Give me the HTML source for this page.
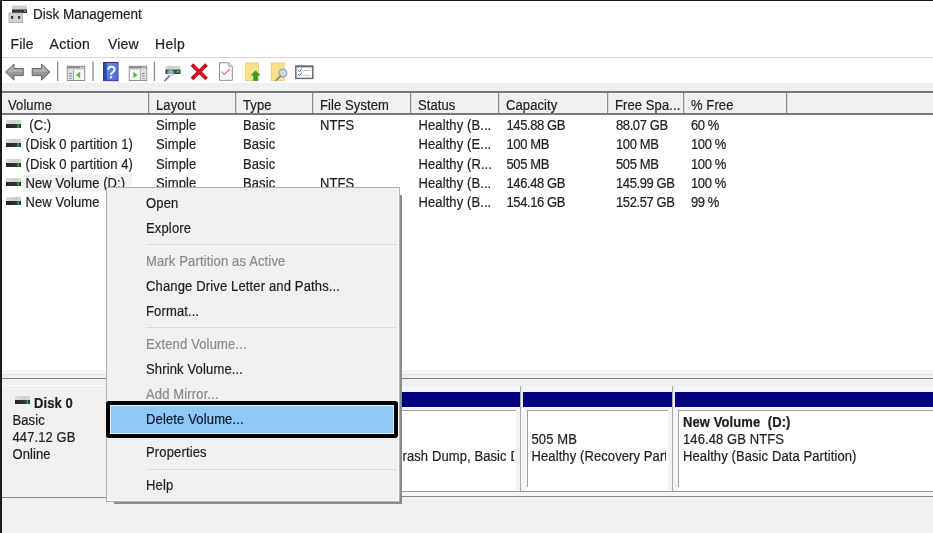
<!DOCTYPE html>
<html><head><meta charset="utf-8">
<style>
*{margin:0;padding:0;box-sizing:border-box}
html,body{width:933px;height:533px;overflow:hidden;background:#f0f0f0}
body{font-family:"Liberation Sans",sans-serif;font-size:13px;color:#1e1e1e;-webkit-text-stroke:0.2px currentColor;position:relative;letter-spacing:0.1px}
.a{position:absolute;white-space:nowrap;transform:scaleY(1.08);transform-origin:0 0}
.b{position:absolute}
.ht{font-size:13px}
.rt{font-size:13px}
.mi{position:absolute;transform:scaleY(1.08);transform-origin:0 0;letter-spacing:0.15px;left:39px;font-size:13px;color:#1e1e1e;white-space:nowrap}
.dis{color:#8a8a8a}
.sep{position:absolute;left:39px;width:250px;height:1px;background:#d9d9d9}
.hs{position:absolute;top:93px;width:2px;height:20px;border-left:1px solid #8e8e8e;border-right:1px solid #d8d8d8}
.drv{position:absolute;left:6px;width:15px;height:8px}
.drv:before{content:"";position:absolute;left:0;top:0;width:15px;height:4px;background:linear-gradient(90deg,#dcdcdc,#d0d0d0 60%,#c8dcc8)}
.drv:after{content:"";position:absolute;left:0;top:4px;width:15px;height:4px;background:linear-gradient(90deg,#262626 0,#303030 55%,#223a2a 68%,#2c5a36 76%,#7cc88a 80%,#2c5a36 86%,#1a2e20 100%)}
</style></head><body>
<!-- window frame -->
<div class="b" style="left:0;top:0;width:933px;height:1px;background:#1a1a1a"></div>
<div class="b" style="left:0;top:0;width:2px;height:533px;background:#1a1a1a"></div>
<!-- title/menu/toolbar white -->
<div class="b" style="left:2px;top:1px;width:931px;height:56px;background:#fff"></div>
<div class="b" style="left:2px;top:57px;width:931px;height:1px;background:#d6d6d6"></div>
<div class="b" style="left:2px;top:58px;width:931px;height:25px;background:#fff"></div>
<!-- gray band then list -->
<div class="b" style="left:2px;top:91px;width:931px;height:2px;background:#767676"></div>
<div class="b" style="left:2px;top:93px;width:931px;height:20px;background:#f0f0f2;box-shadow:inset 0 1px 0 #f8f8f8"></div>
<div class="b" style="left:2px;top:113px;width:931px;height:2px;background:#7a7a7a"></div>
<div class="b" style="left:2px;top:115px;width:931px;height:255px;background:#fff"></div>
<div class="b" style="left:2px;top:370px;width:931px;height:5px;background:#f4f4f4"></div>
<div class="b" style="left:2px;top:374px;width:931px;height:1px;background:#e6e6e6"></div>
<div class="b" style="left:2px;top:378px;width:931px;height:1px;background:#7f7f7f"></div>

<!-- header separators -->
<div class="hs" style="left:148px"></div>
<div class="hs" style="left:235px"></div>
<div class="hs" style="left:312px"></div>
<div class="hs" style="left:410px"></div>
<div class="hs" style="left:498px"></div>
<div class="hs" style="left:607px"></div>
<div class="hs" style="left:683px"></div>
<div class="hs" style="left:786px"></div>

<!-- TOOLBAR ICONS -->
<svg class="b" style="left:0;top:0" width="330" height="90" viewBox="0 0 330 90">
<defs>
<linearGradient id="ga" x1="0" y1="0" x2="0" y2="1"><stop offset="0" stop-color="#b8b8b8"/><stop offset=".55" stop-color="#979797"/><stop offset="1" stop-color="#8a8a8a"/></linearGradient>
<linearGradient id="gh" x1="0" y1="0" x2="1" y2="1"><stop offset="0" stop-color="#5c80e0"/><stop offset="1" stop-color="#2a4cb8"/></linearGradient>
</defs>
<!-- title icon -->
<rect x="12" y="5.5" width="15" height="4.5" fill="#cfcfcf"/>
<rect x="12" y="9.5" width="15" height="3.5" fill="#333"/>
<rect x="24" y="10.3" width="2" height="1.6" fill="#8a8a8a"/>
<rect x="9" y="13" width="13.6" height="9.6" fill="#d4d4d4" stroke="#a8a8a8" stroke-width="0.8"/>
<rect x="11" y="16" width="2.2" height="2.8" fill="#333"/>
<rect x="18" y="16" width="2.2" height="2.8" fill="#333"/>
<!-- back arrow -->
<path d="M5.5 72 L14 64 L14 68.5 L23.3 68.5 L23.3 75.6 L14 75.6 L14 80.2 Z" fill="url(#ga)" stroke="#6a6a6a" stroke-width="1" stroke-linejoin="round"/>
<path d="M8 72 L13 67 L13 70 L22 70 L22 72 Z" fill="#bdbdbd" opacity=".6"/>
<!-- forward arrow -->
<path d="M50 72 L41.5 64 L41.5 68.5 L32.2 68.5 L32.2 75.6 L41.5 75.6 L41.5 80.2 Z" fill="url(#ga)" stroke="#6a6a6a" stroke-width="1" stroke-linejoin="round"/>
<path d="M47.5 72 L42.5 67 L42.5 70 L33.5 70 L33.5 72 Z" fill="#bdbdbd" opacity=".6"/>
<!-- separators -->
<rect x="57" y="61.5" width="1.3" height="19.5" fill="#8a8a8a"/>
<rect x="92.3" y="61.5" width="1.3" height="19.5" fill="#8a8a8a"/>
<rect x="153.8" y="61.5" width="1.3" height="19.5" fill="#8a8a8a"/>
<!-- window icon left -->
<rect x="67.3" y="66.3" width="17.4" height="14.2" fill="#fff" stroke="#8c8c8c" stroke-width="1"/>
<rect x="67.3" y="66.3" width="17.4" height="2.4" fill="#8a8a8a"/><rect x="80" y="66.8" width="1.4" height="1.4" fill="#e0e0e0"/><rect x="82.3" y="66.8" width="1.4" height="1.4" fill="#e0e0e0"/>
<rect x="67.8" y="68.7" width="16.4" height="1.4" fill="#dcdcdc"/>
<rect x="67.8" y="70.1" width="5.2" height="10" fill="#e2e2e2"/>
<rect x="73" y="70.1" width="0.9" height="10" fill="#9a9a9a"/>
<rect x="69" y="73" width="2.8" height="0.9" fill="#777"/>
<rect x="69" y="75.5" width="2.8" height="0.9" fill="#777"/>
<rect x="69" y="78" width="2.8" height="0.9" fill="#999"/>
<path d="M76 75 L80 72 L80 78 Z" fill="#6cc04a"/>
<rect x="74" y="70.5" width="9.5" height="9.3" fill="#e8f6e0" opacity=".6"/>
<path d="M76 75 L80.2 71.8 L80.2 78.2 Z" fill="#5eb840"/>
<!-- help -->
<rect x="103.5" y="62.5" width="14.5" height="18.2" fill="url(#gh)" stroke="#1e3c9c" stroke-width="1"/>
<rect x="104" y="63" width="2.5" height="17.2" fill="#2a48b0"/>
<rect x="107" y="63" width="10.5" height="17.2" fill="#7890e8" opacity=".5"/>
<text x="111.3" y="77.8" font-family="Liberation Sans" font-size="16" fill="#fff" stroke="#fff" stroke-width=".3" text-anchor="middle">?</text>
<!-- window icon right -->
<rect x="129.3" y="66.3" width="17.4" height="14.2" fill="#fff" stroke="#8c8c8c" stroke-width="1"/>
<rect x="129.3" y="66.3" width="17.4" height="2.4" fill="#8a8a8a"/><rect x="142" y="66.8" width="1.4" height="1.4" fill="#e0e0e0"/><rect x="144.3" y="66.8" width="1.4" height="1.4" fill="#e0e0e0"/>
<rect x="129.8" y="68.7" width="16.4" height="1.4" fill="#dcdcdc"/>
<rect x="140.5" y="70.1" width="5.7" height="10" fill="#e2e2e2"/>
<rect x="139.8" y="70.1" width="0.9" height="10" fill="#9a9a9a"/>
<rect x="142" y="73" width="2.8" height="0.9" fill="#777"/>
<rect x="142" y="75.5" width="2.8" height="0.9" fill="#777"/>
<rect x="142" y="78" width="2.8" height="0.9" fill="#999"/>
<rect x="130.3" y="70.5" width="9.3" height="9.3" fill="#e8f6e0" opacity=".6"/>
<path d="M137.5 75 L133.3 71.8 L133.3 78.2 Z" fill="#5eb840"/>
<!-- disk w/ magnifier -->
<rect x="165.5" y="65.8" width="15" height="4" fill="#cfd6cf"/>
<rect x="165.5" y="69.6" width="15" height="4.4" fill="#2e3e34"/>
<rect x="174" y="70.5" width="6" height="2.6" fill="#2f6a3a"/>
<rect x="177" y="71.2" width="2" height="1.2" fill="#9fe0a0"/>
<circle cx="170.5" cy="73" r="3.3" fill="#c0d8ec" opacity=".7" stroke="#9ab0c4" stroke-width=".8"/>
<path d="M165 80.5 L169 76.3" stroke="#6a7a8a" stroke-width="1.8" stroke-linecap="round"/>
<!-- red X -->
<path d="M193.3 66 L205.2 77.5 M205.2 66 L193.3 77.5" stroke="#b80c18" stroke-width="3.8" stroke-linecap="square"/>
<path d="M194 66.7 L204.5 76.8 M204.5 66.7 L194 76.8" stroke="#e01a28" stroke-width="1.6"/>
<!-- doc w/ check -->
<path d="M219.5 62.8 L228.8 62.8 L232.3 66.3 L232.3 80.3 L219.5 80.3 Z" fill="#fff" stroke="#8c8c8c" stroke-width="1"/>
<path d="M228.8 62.8 L228.8 66.3 L232.3 66.3" fill="#eee" stroke="#8c8c8c" stroke-width=".8"/>
<path d="M221.5 71.5 L224.3 74.6 L230 68.8" fill="none" stroke="#e88a6a" stroke-width="1.4"/>
<!-- yellow w/ green arrow -->
<rect x="245.3" y="63" width="13" height="17.5" fill="#fbe08a" stroke="#e8c868" stroke-width="0.8"/>
<path d="M255.6 70.8 L260 75.2 L257.6 75.2 L257.6 80.6 L253.6 80.6 L253.6 75.2 L251.2 75.2 Z" fill="#2ea02e" stroke="#1e8a1e" stroke-width=".5"/>
<!-- yellow w/ magnifier -->
<rect x="271.3" y="63" width="13" height="17.5" fill="#fbe08a" stroke="#e8c868" stroke-width="0.8"/>
<circle cx="283" cy="73" r="3.9" fill="#c8d8e4" stroke="#9aa8b0" stroke-width="1.2"/>
<path d="M276.3 80.2 L280.3 76.3" stroke="#8a7a50" stroke-width="1.6" stroke-linecap="round"/>
<!-- checklist window -->
<rect x="295.8" y="66" width="17" height="12.4" fill="#fbfdff" stroke="#6c6c6c" stroke-width="1.5"/>
<rect x="295.8" y="66" width="17" height="1.4" fill="#6c6c6c"/>
<path d="M298.2 70.2 L299.6 71.8 L301.8 68.5" fill="none" stroke="#4a78c8" stroke-width="1"/>
<path d="M298.2 74.2 L299.6 75.8 L301.8 72.5" fill="none" stroke="#4a78c8" stroke-width="1"/>
<rect x="303.5" y="70" width="7" height="0.9" fill="#b8b8b8"/>
<rect x="303.5" y="74.8" width="7" height="0.9" fill="#b8b8b8"/>
</svg>
<!-- title -->
<div class="a" style="left:33px;top:6px;font-size:13.5px;letter-spacing:0">Disk Management</div>
<!-- menu -->
<div class="a" style="left:10.5px;top:34.5px;font-size:14px;letter-spacing:0.2px">File</div>
<div class="a" style="left:49.5px;top:34.5px;font-size:14px;letter-spacing:0.3px">Action</div>
<div class="a" style="left:108px;top:34.5px;font-size:14px;letter-spacing:0.2px">View</div>
<div class="a" style="left:155px;top:34.5px;font-size:14px;letter-spacing:0.3px">Help</div>

<!-- header text -->
<div class="a ht" style="top:96.5px;left:8px">Volume</div>
<div class="a ht" style="top:96.5px;left:156px">Layout</div>
<div class="a ht" style="top:96.5px;left:243px">Type</div>
<div class="a ht" style="top:96.5px;left:320px">File System</div>
<div class="a ht" style="top:96.5px;left:418px">Status</div>
<div class="a ht" style="top:96.5px;left:506px">Capacity</div>
<div class="a ht" style="top:96.5px;left:615px">Free Spa...</div>
<div class="a ht" style="top:96.5px;left:691px">% Free</div>

<!-- ROWS -->
<div id="rows">
<div class="b" style="left:23px;top:173.5px;width:109px;height:18.5px;background:#f2f2f2"></div>
<div class="drv" style="top:120.00px"></div>
<div class="a rt" style="left:25.5px;top:117.00px">&nbsp;(C:)</div>
<div class="a rt" style="left:156px;top:117.00px">Simple</div>
<div class="a rt" style="left:243px;top:117.00px">Basic</div>
<div class="a rt" style="left:320px;top:117.00px">NTFS</div>
<div class="a rt" style="left:418.5px;top:117.00px">Healthy (B...</div>
<div class="a rt" style="letter-spacing:-0.4px;left:506.5px;top:117.00px">145.88 GB</div>
<div class="a rt" style="letter-spacing:-0.4px;left:616px;top:117.00px">88.07 GB</div>
<div class="a rt" style="letter-spacing:-0.4px;left:691px;top:117.00px">60 %</div>
<div class="drv" style="top:139.35px"></div>
<div class="a rt" style="left:25.5px;top:136.35px">(Disk 0 partition 1)</div>
<div class="a rt" style="left:156px;top:136.35px">Simple</div>
<div class="a rt" style="left:243px;top:136.35px">Basic</div>
<div class="a rt" style="left:418.5px;top:136.35px">Healthy (E...</div>
<div class="a rt" style="letter-spacing:-0.4px;left:506.5px;top:136.35px">100 MB</div>
<div class="a rt" style="letter-spacing:-0.4px;left:616px;top:136.35px">100 MB</div>
<div class="a rt" style="letter-spacing:-0.4px;left:691px;top:136.35px">100 %</div>
<div class="drv" style="top:158.70px"></div>
<div class="a rt" style="left:25.5px;top:155.70px">(Disk 0 partition 4)</div>
<div class="a rt" style="left:156px;top:155.70px">Simple</div>
<div class="a rt" style="left:243px;top:155.70px">Basic</div>
<div class="a rt" style="left:418.5px;top:155.70px">Healthy (R...</div>
<div class="a rt" style="letter-spacing:-0.4px;left:506.5px;top:155.70px">505 MB</div>
<div class="a rt" style="letter-spacing:-0.4px;left:616px;top:155.70px">505 MB</div>
<div class="a rt" style="letter-spacing:-0.4px;left:691px;top:155.70px">100 %</div>
<div class="drv" style="top:178.05px"></div>
<div class="a rt" style="left:25.5px;top:175.05px">New Volume (D:)</div>
<div class="a rt" style="left:156px;top:175.05px">Simple</div>
<div class="a rt" style="left:243px;top:175.05px">Basic</div>
<div class="a rt" style="left:320px;top:175.05px">NTFS</div>
<div class="a rt" style="left:418.5px;top:175.05px">Healthy (B...</div>
<div class="a rt" style="letter-spacing:-0.4px;left:506.5px;top:175.05px">146.48 GB</div>
<div class="a rt" style="letter-spacing:-0.4px;left:616px;top:175.05px">145.99 GB</div>
<div class="a rt" style="letter-spacing:-0.4px;left:691px;top:175.05px">100 %</div>
<div class="drv" style="top:197.40px"></div>
<div class="a rt" style="left:25.5px;top:194.40px">New Volume</div>
<div class="a rt" style="left:156px;top:194.40px">Simple</div>
<div class="a rt" style="left:243px;top:194.40px">Basic</div>
<div class="a rt" style="left:418.5px;top:194.40px">Healthy (B...</div>
<div class="a rt" style="letter-spacing:-0.4px;left:506.5px;top:194.40px">154.16 GB</div>
<div class="a rt" style="letter-spacing:-0.4px;left:616px;top:194.40px">152.57 GB</div>
<div class="a rt" style="letter-spacing:-0.4px;left:691px;top:194.40px">99 %</div>
</div>

<!-- BOTTOM -->
<div id="bottom">
<!-- disk label panel -->
<div class="b" style="left:2px;top:385px;width:400px;height:1px;background:#fafafa"></div>
<div class="b" style="left:2px;top:497px;width:400px;height:1px;background:#8a8a8a"></div>
<div class="drv" style="left:15px;top:396px;width:15px;height:7px"></div>
<div class="a" style="left:34px;top:395px;font-weight:bold">Disk 0</div>
<div class="a" style="left:12.5px;top:412px">Basic</div>
<div class="a" style="left:12.5px;top:429px">447.12 GB</div>
<div class="a" style="left:12.5px;top:446px">Online</div>
<!-- partitions frame -->
<div class="b" style="left:300px;top:386px;width:633px;height:6px;background:#f6f6fa"></div>
<div class="b" style="left:300px;top:392px;width:633px;height:15px;background:#000080"></div>
<div class="b" style="left:300px;top:407px;width:633px;height:3px;background:#f7f7f7"></div>
<div class="b" style="left:300px;top:410px;width:633px;height:1px;background:#a0a0a0"></div>
<div class="b" style="left:300px;top:411px;width:633px;height:80px;background:#fff"></div>
<div class="b" style="left:300px;top:491px;width:633px;height:1px;background:#9a9a9a"></div>
<div class="b" style="left:300px;top:492px;width:633px;height:4px;background:#f6f6f6"></div>
<div class="b" style="left:300px;top:496px;width:633px;height:1px;background:#8a8a8a"></div>
<!-- partition gaps -->
<div class="b" style="left:516px;top:410px;width:4px;height:81px;background:#f2f2f2"></div>
<div class="b" style="left:520px;top:386px;width:1px;height:105px;background:#a9a9a9"></div>
<div class="b" style="left:521px;top:386px;width:2px;height:21px;background:#e8e8f0"></div>
<div class="b" style="left:521px;top:407px;width:6px;height:84px;background:#f5f5f5"></div>
<div class="b" style="left:527px;top:410px;width:1px;height:77px;background:#a0a0a0"></div>
<div class="b" style="left:527px;top:487px;width:141px;height:4px;background:#fff"></div>
<div class="b" style="left:668px;top:410px;width:4px;height:81px;background:#f2f2f2"></div>
<div class="b" style="left:672px;top:386px;width:1px;height:105px;background:#a9a9a9"></div>
<div class="b" style="left:673px;top:386px;width:2px;height:21px;background:#e8e8f0"></div>
<div class="b" style="left:673px;top:407px;width:5px;height:84px;background:#f5f5f5"></div>
<div class="b" style="left:678px;top:410px;width:1px;height:77px;background:#a0a0a0"></div>
<!-- partition text -->
<div class="b" style="left:300px;top:448px;width:214px;height:17px;overflow:hidden"><div class="a" style="left:102.5px;top:0">rash Dump, Basic Data Partition)</div></div>
<div class="a" style="left:531.5px;top:431px">505 MB</div>
<div class="a" style="left:531.5px;top:448px;width:134px;overflow:hidden">Healthy (Recovery Partition)</div>
<div class="a" style="left:683px;top:414px;font-weight:bold">New Volume&nbsp; (D:)</div>
<div class="a" style="left:683px;top:431px">146.48 GB NTFS</div>
<div class="a" style="left:683px;top:448px">Healthy (Basic Data Partition)</div>
</div>

<div class="b" style="left:400px;top:195px;width:1.5px;height:309px;background:#8c8c8c;filter:blur(0.5px)"></div>
<div class="b" style="left:114px;top:502px;width:288px;height:2px;background:#8c8c8c;filter:blur(0.6px)"></div>
<!-- CONTEXT MENU -->
<div id="ctx" class="b" style="left:106px;top:187px;width:294px;height:315px;background:#f0f0f0;border:1px solid #b0b0b0;box-shadow:inset -1px -1px 0 #fafafa">
  <div class="mi" style="top:7px">Open</div>
  <div class="mi" style="top:32px">Explore</div>
  <div class="sep" style="top:56px"></div>
  <div class="mi dis" style="top:65px">Mark Partition as Active</div>
  <div class="mi" style="top:90px">Change Drive Letter and Paths...</div>
  <div class="mi" style="top:115px">Format...</div>
  <div class="sep" style="top:139px"></div>
  <div class="mi dis" style="top:148px">Extend Volume...</div>
  <div class="mi" style="top:173px">Shrink Volume...</div>
  <div class="mi dis" style="top:198px">Add Mirror...</div>
  <div class="b" style="left:-1px;top:213px;width:292px;height:37px;border:4px solid #000;border-radius:3px;background:#8ec8f4;box-shadow:inset 0 0 0 1px #e4f2fc"></div>
  <div class="mi" style="top:223px;color:#0c1830">Delete Volume...</div>
  <div class="mi" style="top:256px">Properties</div>
  <div class="sep" style="top:281px"></div>
  <div class="mi" style="top:289px">Help</div>
</div>
</body></html>
